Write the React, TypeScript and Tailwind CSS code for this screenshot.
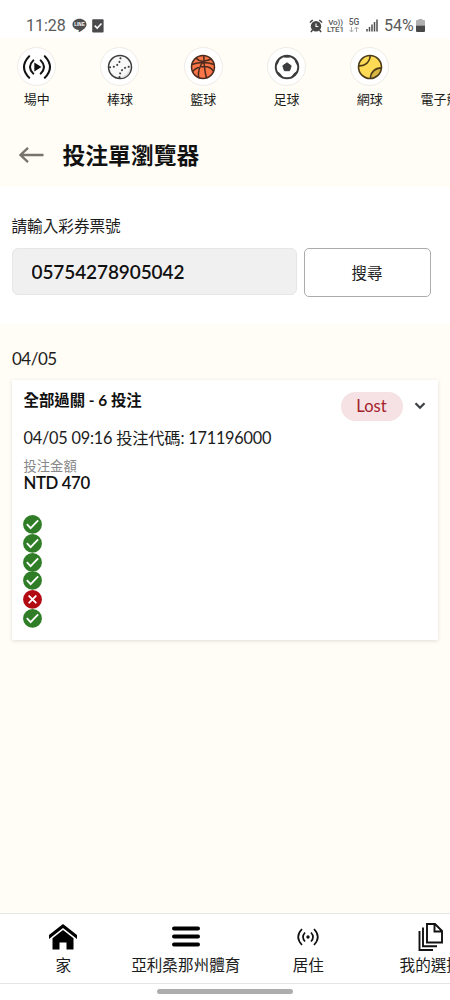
import React from "react";

type IconProps = { className?: string };

const LineBadge = () => (
  <svg viewBox="0 0 16 16" className="h-[15px] w-[15px]">
    <path d="M8 .8C3.800.8.5 3.500.5 6.800c0 3 2.600 5.300 6 5.800l.6.2c.3.3-.1 1.500-.1 2.100 0 .6 8.500-3.500 8.500-8.100C15.500 3.500 12.200.8 8 .8Z" fill="#4f4f4f" />
    <text x="8" y="8.600" textAnchor="middle" fontFamily="Liberation Sans, sans-serif" fontWeight="700" fontSize="4.900" fill="#fff">LINE</text>
  </svg>
);

const CheckBadge = () => (
  <svg viewBox="0 0 12 14" className="h-[14px] w-[12px]">
    <rect x=".2" y=".2" width="11.400" height="13.400" rx="1" fill="#4a4a4c" />
    <path d="m2.700 6.600 2.500 2.500 4.300-4.500" fill="none" stroke="#fff" strokeWidth="1.500" />
  </svg>
);

const Alarm = () => (
  <svg viewBox="0 0 14 14" className="h-[14px] w-[14px]">
    <circle cx="7" cy="7.200" r="5.200" fill="#474747" />
    <path d="M.9 3.500 3.700 1M13.100 3.500 10.300 1M3.500 11l-1.600 1.900M10.500 11l1.600 1.900" stroke="#474747" strokeWidth="1.600" />
    <path d="M7 4.500v3h2.300" fill="none" stroke="#fff" strokeWidth="1.100" />
  </svg>
);

const Signal = () => (
  <svg viewBox="0 0 12 13" className="h-[13px] w-[12px]">
    <path d="M1 10v2.500M3.500 8v4.500M6 5.500v7M8.500 3v9.500M11 .5v12" stroke="#4d4d4d" strokeWidth="1.500" />
  </svg>
);

const Battery = () => (
  <svg viewBox="0 0 9 13" className="h-[13px] w-[9px]">
    <path d="M2.500 0h4v1H8q1 0 1 1v4.500H0V2q0-1 1-1h1.500Z" fill="#b0b0b0" />
    <path d="M0 6.500h9V12q0 1-1 1H1q-1 0-1-1Z" fill="#484848" />
  </svg>
);

const LivePlay = () => (
  <svg viewBox="0 0 30 24" className="h-[24px] w-[30px]" fill="none" stroke="#111" strokeWidth="2" strokeLinecap="round">
    <path d="M7.200 1.200Q-3.200 12 7.200 22.800M11.300 5.400Q4.700 12 11.300 18.600" />
    <path d="M22.800 1.200Q33.200 12 22.800 22.800M18.700 5.400Q25.300 12 18.700 18.600" />
    <path d="M12.300 7.600v8.800l7.200-4.400Z" fill="#111" stroke="none" />
  </svg>
);

const Baseball = () => (
  <svg viewBox="0 0 26 26" className="h-[26px] w-[26px]" fill="none" stroke="#3d3d3d">
    <circle cx="13" cy="13" r="11.500" fill="#f8f8f8" strokeWidth="1.500" />
    <path d="M12 23.500Q21 22 23 13.500Q24 21 16 24Z" fill="#ddd" stroke="none" />
    <path d="M3 13.200C9 13.500 13.500 9.500 13.500 2.800M12.500 23.200C12.500 17 17 12.700 23 12.800" strokeWidth="2" strokeDasharray=".1 3.700" strokeLinecap="round" />
  </svg>
);

const Basketball = () => (
  <svg viewBox="0 0 26 26" className="h-[26px] w-[26px]" fill="none" stroke="#4b2b1d" strokeWidth="1.500">
    <circle cx="13" cy="13" r="11.500" fill="#fa7547" />
    <path d="M1.800 10.500Q13 6.500 24.200 10.500M13.800 1.500C14 8 14 15 16.500 24M14 7C10 11 8 17 8.500 23.500M6 4Q9.500 7.800 14 7Q18.500 6.500 21 5M2.500 17.500Q7 12.500 14 12.500T23.500 17.500" />
  </svg>
);

const Football = () => (
  <svg viewBox="0 0 26 26" className="h-[26px] w-[26px]">
    <circle cx="13" cy="13" r="11.300" fill="#fff" stroke="#3b3c3e" strokeWidth="1.900" />
    <path d="m13 8.800 4.200 3-1.600 4.900h-5.200l-1.600-4.900Z" fill="#3b3c3e" stroke="#3b3c3e" strokeLinejoin="round" />
    <path d="M8.500 2.400Q13 5.200 17.500 2.400Q13 0 8.500 2.400ZM20.300 4.400Q21.200 9.800 24.500 12.500Q25 7.500 20.300 4.400ZM23.600 17Q19.500 18.500 17.500 23.300Q22 22 23.600 17ZM2.400 17Q6.500 18.500 8.500 23.300Q4 22 2.400 17ZM5.700 4.400Q4.800 9.800 1.500 12.500Q1 7.500 5.700 4.400Z" fill="#3b3c3e" />
  </svg>
);

const Tennis = () => (
  <svg viewBox="0 0 26 26" className="h-[26px] w-[26px]" fill="none" stroke="#4a3b1b" strokeWidth="1.600">
    <circle cx="13" cy="13" r="11.500" fill="#ffda55" stroke="none" />
    <path d="M14.500 24C15 18 19 14.500 24.200 14.300Q22 22 14.500 24Z" fill="#d9b642" stroke="none" />
    <circle cx="13" cy="13" r="11.500" />
    <path d="M1.500 11.800C8 12.300 13 8 13.200 1.600M13.500 24.400C13.500 18.200 18 14 24.500 13.900" />
  </svg>
);

const BackArrow = () => (
  <svg viewBox="0 0 26 18" className="h-[18px] w-[26px]" fill="none" stroke="#77746f" strokeWidth="2.400">
    <path d="M25.500 9H3M10 1.800 2.500 9l7.500 7.200" />
  </svg>
);

const ResultIcon = ({ won }: { won: boolean }) => (
  <svg viewBox="0 0 20 20" className="h-[18.800px] w-[19px]">
    <circle cx="10" cy="10" r="10" fill={won ? "#2f7d27" : "#b30b14"} />
    {won ? (
      <path d="m4 9.800 4 4.200 8-8.300" fill="none" stroke="#fff" strokeWidth="1.900" />
    ) : (
      <path d="m6.500 6.500 7 7m0-7-7 7" fill="none" stroke="#fff" strokeWidth="2" strokeLinecap="round" />
    )}
  </svg>
);

const House = ({ className }: IconProps) => (
  <svg viewBox="0 0 28 26" className={className}>
    <path d="M14 0 28 11v4L14 4 0 15v-4Z" fill="#000" />
    <path d="m14 6 10.500 8.300V25.500h-7v-7h-7v7h-7V14.300Z" fill="#000" />
  </svg>
);

const Bars = ({ className }: IconProps) => (
  <svg viewBox="0 0 28 22" className={className}>
    <path d="M2 2.500h24M2 10.500h24M2 18.500h24" stroke="#000" strokeWidth="4" strokeLinecap="round" />
  </svg>
);

const LiveDot = ({ className }: IconProps) => (
  <svg viewBox="0 0 22 18" className={className} fill="none" stroke="#111" strokeWidth="1.700">
    <path d="M5 1Q-2.600 9 5 17M17 1q7.600 8 0 16M8 4.500Q4 9 8 13.500M14 4.500q4 4.500 0 9" />
    <circle cx="11" cy="9" r="1.700" fill="#111" stroke="none" />
  </svg>
);

const Documents = ({ className }: IconProps) => (
  <svg viewBox="0 0 25 28" className={className} fill="none" stroke="#111" strokeWidth="1.900">
    <path d="M9 1h8l7 7v11.500H9ZM16.500 1v7.500H24M5 4.500v18.700h14M1.500 8v19h13.500" />
  </svg>
);

const sports = [
  { label: "場中", icon: <LivePlay /> },
  { label: "棒球", icon: <Baseball /> },
  { label: "籃球", icon: <Basketball /> },
  { label: "足球", icon: <Football /> },
  { label: "網球", icon: <Tennis /> },
];

const results = [true, true, true, true, false, true];

const tabs = [
  { label: "家", icon: <House className="h-[26px] w-[28px]" /> },
  { label: "亞利桑那州體育", icon: <Bars className="h-[22px] w-[28px]" /> },
  { label: "居住", icon: <LiveDot className="h-[18px] w-[22px]" /> },
  { label: "我的選擇", icon: <Documents className="h-[28px] w-[25px]" /> },
];

export default function App() {
  return (
    <div className="flex h-[1000px] w-[450px] flex-col overflow-hidden bg-white font-[Lato,'Noto_Sans_CJK_TC',sans-serif] text-[#1c1c1c]">
      <header className="flex h-[38px] shrink-0 items-center justify-between pt-[13px] pr-[25px] pl-[26px] font-[Roboto,sans-serif] text-[#5a5a5a]">
        <div className="flex items-center">
          <span className="w-[46px] text-[16px] leading-5">11:28</span>
          <LineBadge />
          <span className="ml-[5px]"><CheckBadge /></span>
        </div>
        <div className="flex items-center">
          <Alarm />
          <span className="ml-[4px] flex w-[17px] flex-col text-center text-[8px] leading-[7px] font-medium tracking-[-0.1px]">
            <span>Vo))</span>
            <span>LTE1</span>
          </span>
          <span className="ml-[4px] flex w-[12px] flex-col items-center text-[8.500px] leading-[7px] font-medium">
            <span>5G</span>
            <svg viewBox="0 0 10 7" className="h-[7px] w-[10px]" fill="none" stroke="#aaa"><path d="M2.500 1v5M.5 4l2 2 2-2M7.500 6V1M5.500 3l2-2 2 2" /></svg>
          </span>
          <span className="ml-[6px]"><Signal /></span>
          <span className="ml-[6px] w-[32px] text-[16px] leading-5">54%</span>
          <Battery />
        </div>
      </header>

      <div className="h-[149px] shrink-0 overflow-hidden bg-[#fffdf5]">
        <nav className="-ml-[5px] flex pt-[9px]">
          {sports.map((s) => (
            <a key={s.label} className="flex w-[83.300px] shrink-0 flex-col items-center">
              <span className="flex h-[39px] w-[39px] items-center justify-center rounded-full border border-[#eeece6] bg-white">{s.icon}</span>
              <span className="mt-[3px] text-[13px] leading-5">{s.label}</span>
            </a>
          ))}
          <a className="ml-[9px] shrink-0 pt-[42px] text-[13px] leading-5 whitespace-nowrap">電子競技</a>
        </nav>
        <div className="mt-[31px] flex items-center pl-[18px]">
          <BackArrow />
          <h1 className="ml-[18.500px] text-[22.800px] leading-[30px] font-bold text-[#111]">投注單瀏覽器</h1>
        </div>
      </div>

      <section className="h-[137px] shrink-0 px-[11.500px] pt-[28px]">
        <label className="block text-[15.600px] leading-[22px]">請輸入彩券票號</label>
        <div className="mt-[11px] flex gap-[7px]">
          <input readOnly value="05754278905042" className="h-[47px] w-[285px] rounded-[6px] border border-[#e6e6e6] bg-[#f0f0f0] px-[19px] text-[19px] font-semibold tracking-[-0.1px] text-[#111] outline-none" />
          <button className="h-[49px] w-[127px] rounded-[5px] border border-[#acacac] bg-white pt-[2px] text-[15.500px]">搜尋</button>
        </div>
      </section>

      <main className="h-[589px] shrink-0 bg-[#fffdf5] pt-[24px]">
        <p className="pl-[12px] text-[17px] leading-[22px] tracking-[-0.500px]">04/05</p>
        <article className="mt-[10px] ml-[12px] h-[260px] w-[426px] bg-white px-[11.500px] pt-[10px] shadow-[0_1px_4px_rgba(0,0,0,0.13)]">
          <div className="-mr-[1px] flex h-[32px] justify-between">
            <h2 className="text-[15.400px] leading-[20px] font-bold text-[#111]">全部過關 - 6 投注</h2>
            <div className="mr-[2px] flex items-center gap-[11px]">
              <span className="flex h-[29px] w-[62px] items-center justify-center rounded-full bg-[#f6e1e4] text-[16.500px] text-[#a3212b]">Lost</span>
              <svg viewBox="0 0 12 8" className="h-[8px] w-[12px]" fill="none" stroke="#3c4043" strokeWidth="2.200"><path d="m1.500 1.200 4.500 4.600 4.500-4.600" /></svg>
            </div>
          </div>
          <p className="mt-[5px] text-[16.300px] leading-[22px] tracking-[-0.220px]">04/05 09:16 投注代碼: 171196000</p>
          <p className="mt-[8px] text-[13.300px] leading-[18px] text-[#888]">投注金額</p>
          <p className="text-[16.800px] leading-[16px] font-semibold tracking-[-0.400px] text-[#111]">NTD 470</p>
          <div className="mt-[24px] -ml-[.5px] flex flex-col">
            {results.map((won, i) => (
              <ResultIcon key={i} won={won} />
            ))}
          </div>
        </article>
      </main>

      <nav className="flex h-[71px] shrink-0 overflow-hidden border-y border-[#e5e5e5] pl-[2px]">
        {tabs.map((t) => (
          <a key={t.label} className="flex w-[122.500px] shrink-0 flex-col items-center pt-[8px]">
            <span className="flex h-[30px] items-center">{t.icon}</span>
            <span className="mt-[2px] text-[15.600px] leading-[22px] whitespace-nowrap">{t.label}</span>
          </a>
        ))}
      </nav>
      <footer className="flex grow justify-center pt-[5px]">
        <div className="h-[5px] w-[136px] rounded-full bg-[#adadad]" />
      </footer>
    </div>
  );
}
